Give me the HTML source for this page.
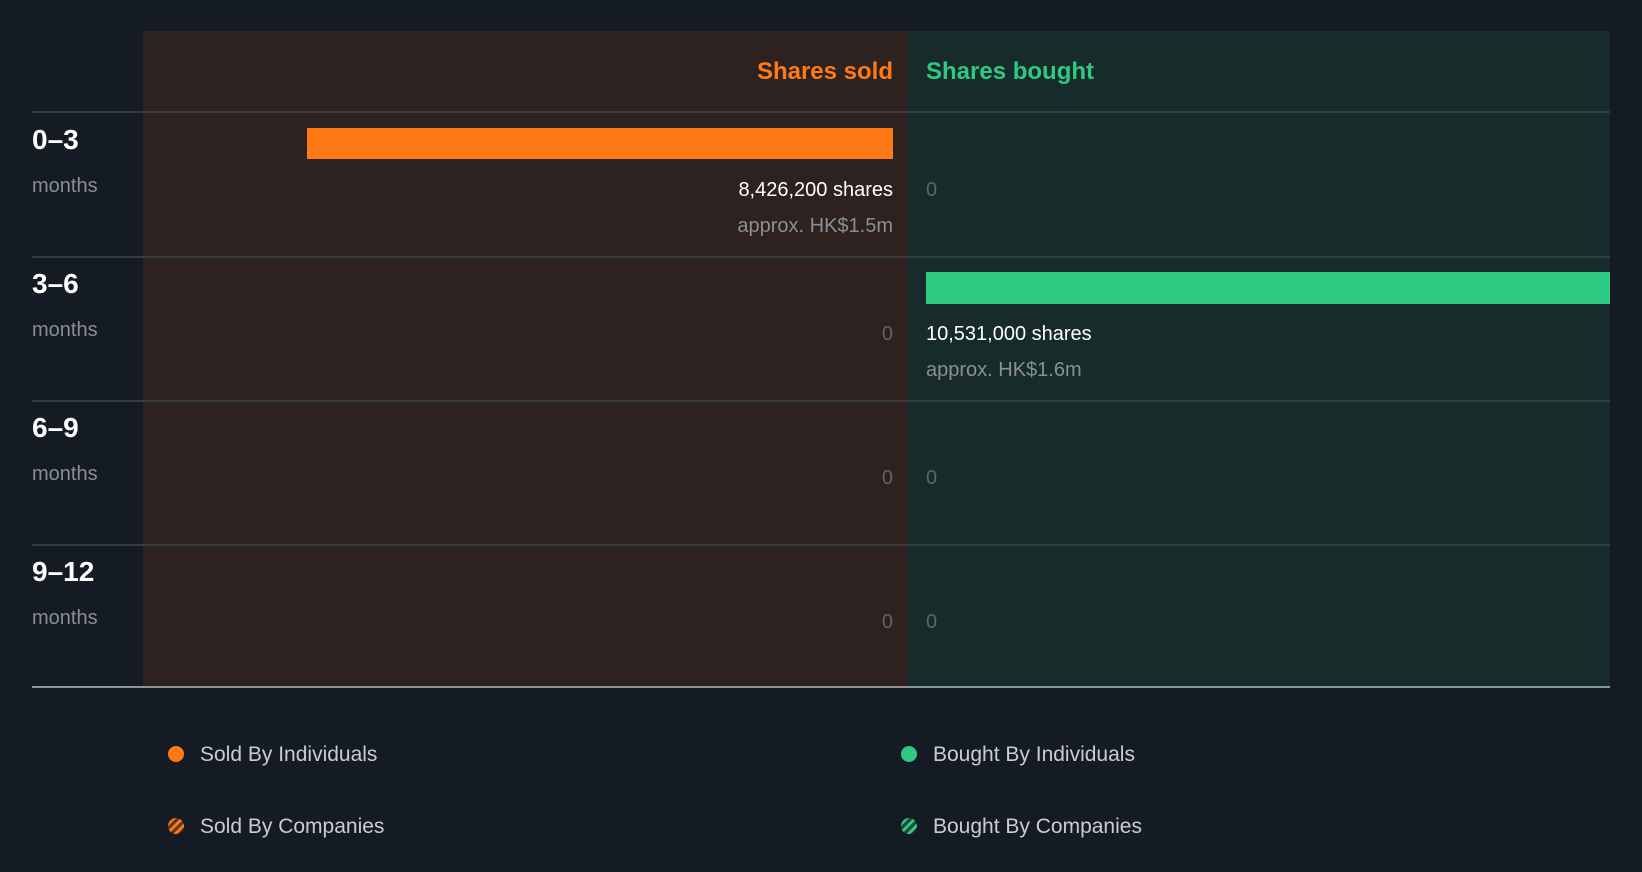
<!DOCTYPE html>
<html><head><meta charset="utf-8"><style>
*{margin:0;padding:0;box-sizing:border-box}
body{width:1642px;height:872px;background:#151b24;font-family:"Liberation Sans",Roboto,sans-serif;position:relative;overflow:hidden}
.a{position:absolute}
.sold{left:143px;top:31px;width:765px;height:656px;background:#2d2220}
.bought{left:908px;top:31px;width:702px;height:656px;background:#172b2b}
.line{left:32px;width:1578px;height:2px;background:#363b40}
.hdr{font-size:24px;font-weight:bold;top:58px}
.rl{left:32px;font-size:28px;font-weight:bold;color:#fff}
.mo{left:32px;font-size:20px;color:#8a8f95}
.r{text-align:right;right:749px}
.l{left:926px}
.v{font-size:20px;color:#fff}
.ap{font-size:20px;color:#8a8f95}
.z{font-size:20px;color:#5e6468}
.lg{font-size:21px;color:#c9cdd1}
.dot{width:16px;height:16px;border-radius:50%}
</style></head><body>
<div class="a sold"></div>
<div class="a bought"></div>
<div class="a line" style="top:111px"></div>
<div class="a line" style="top:256px"></div>
<div class="a line" style="top:400px"></div>
<div class="a line" style="top:544px"></div>
<div class="a" style="left:32px;top:686px;width:1578px;height:2px;background:#8f959b"></div>

<div class="a hdr r" style="color:#ff7916">Shares sold</div>
<div class="a hdr l" style="color:#2ec982">Shares bought</div>

<div class="a rl" style="top:124px">0–3</div><div class="a mo" style="top:175px">months</div>
<div class="a rl" style="top:268px">3–6</div><div class="a mo" style="top:319px">months</div>
<div class="a rl" style="top:412px">6–9</div><div class="a mo" style="top:463px">months</div>
<div class="a rl" style="top:556px">9–12</div><div class="a mo" style="top:607px">months</div>

<div class="a" style="left:307px;top:128px;width:586px;height:31px;background:#ff7916"></div>
<div class="a v r" style="top:179px">8,426,200 shares</div>
<div class="a ap r" style="top:215px">approx. HK$1.5m</div>
<div class="a z l" style="top:179px">0</div>

<div class="a" style="left:926px;top:272px;width:684px;height:32px;background:#2ec982"></div>
<div class="a z r" style="top:323px">0</div>
<div class="a v l" style="top:323px">10,531,000 shares</div>
<div class="a ap l" style="top:359px">approx. HK$1.6m</div>

<div class="a z r" style="top:467px">0</div><div class="a z l" style="top:467px">0</div>
<div class="a z r" style="top:611px">0</div><div class="a z l" style="top:611px">0</div>

<div class="a dot" style="left:168px;top:746px;background:#ff7916"></div>
<div class="a lg" style="left:200px;top:743px">Sold By Individuals</div>
<div class="a dot" style="left:901px;top:746px;background:#2ec982"></div>
<div class="a lg" style="left:933px;top:743px">Bought By Individuals</div>
<div class="a dot" style="left:168px;top:818px;background:repeating-linear-gradient(135deg,#5a3a22 0 3px,#ff7916 3px 6px)"></div>
<div class="a lg" style="left:200px;top:815px">Sold By Companies</div>
<div class="a dot" style="left:901px;top:818px;background:repeating-linear-gradient(135deg,#1f4a3a 0 3px,#2ec982 3px 6px)"></div>
<div class="a lg" style="left:933px;top:815px">Bought By Companies</div>
</body></html>
